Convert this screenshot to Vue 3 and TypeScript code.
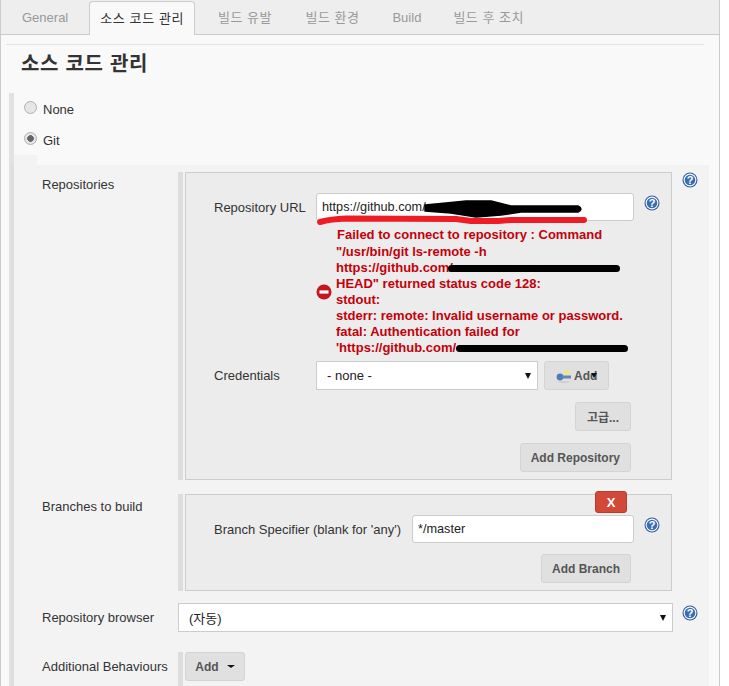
<template>
  <div class="page">
    <nav class="tabs">
      <span
        v-for="tab in tabs"
        :key="tab"
        class="tab"
        :class="{ active: tab === activeTab, ko: isKorean(tab) }"
      >{{ tab }}</span>
    </nav>

    <div class="body">
      <h1 class="title">소스 코드 관리</h1>

      <div class="scm">
        <label class="radio-row">
          <span class="radio"></span>
          <span>None</span>
        </label>
        <label class="radio-row git">
          <span class="radio checked"></span>
          <span>Git</span>
        </label>

        <div class="notch"></div>
        <div class="config">
          <!-- Repositories -->
          <div class="row repo-row">
            <div class="row-label">Repositories</div>
            <div class="nested">
              <div class="box repo-box">
                <div class="field">
                  <div class="field-label">Repository URL</div>
                  <div class="url-wrap">
                    <input class="text-input" value="https://github.com/" readonly />
                    <svg class="scribble" width="290" height="36" viewBox="0 0 290 36" aria-hidden="true">
                      <path class="ink" d="M109 12 L130 10 L150 8 L175 8 L195 13 L262 13 Q268 16 262 19 L205 19 L185 22 L160 24 L135 20 L109 18 Z" />
                      <path class="red-line" d="M4 29 Q15 26 30 25.5 L140 26 L155 28 L182 28 L195 27 L268 27" />
                    </svg>
                  </div>
                  <svg class="help" viewBox="0 0 16 16" aria-hidden="true">
                    <circle cx="8" cy="8" r="7.5" fill="#2f5c9f" />
                    <circle cx="8" cy="8" r="6.4" fill="#fff" />
                    <circle cx="8" cy="8" r="5.3" fill="#3a6db0" />
                    <text x="8" y="12" class="help-mark">?</text>
                  </svg>
                </div>

                <div class="error">
                  <svg class="error-icon" viewBox="0 0 16 16" aria-hidden="true">
                    <circle cx="8" cy="8" r="7.5" fill="#c4161c" />
                    <rect x="3.5" y="6.4" width="9" height="3.2" fill="#fff" />
                  </svg>
                  <div class="error-text">
                    <div class="first-line">Failed to connect to repository : Command</div>
                    <div>"/usr/bin/git ls-remote -h</div>
                    <div class="masked">https://github.com/<span class="blot blot-a"></span></div>
                    <div>HEAD" returned status code 128:</div>
                    <div>stdout:</div>
                    <div>stderr: remote: Invalid username or password.</div>
                    <div>fatal: Authentication failed for</div>
                    <div class="masked">'https://github.com/<span class="blot blot-b"></span></div>
                  </div>
                </div>

                <div class="field credentials">
                  <div class="field-label">Credentials</div>
                  <div class="select cred-select">
                    <span>- none -</span>
                    <i class="caret"></i>
                  </div>
                  <button class="btn key-btn" type="button">
                    <svg class="key" viewBox="0 0 16 16" aria-hidden="true">
                      <ellipse cx="8" cy="14" rx="6" ry="1" fill="#cfcfcf" />
                      <circle cx="4" cy="9" r="3.4" fill="#4f7db8" />
                      <rect x="6" y="7.5" width="9" height="3" fill="#5b88c0" />
                      <circle cx="11" cy="4.5" r="2.2" fill="#f4ea5a" />
                    </svg>
                    <span>Add</span>
                    <i class="caret mini"></i>
                  </button>
                </div>

                <div class="actions advanced">
                  <button class="btn ko-btn" type="button">고급...</button>
                </div>
                <div class="actions add-repo">
                  <button class="btn" type="button">Add Repository</button>
                </div>
              </div>
            </div>
            <svg class="help outer-help" viewBox="0 0 16 16" aria-hidden="true">
              <circle cx="8" cy="8" r="7.5" fill="#2f5c9f" />
              <circle cx="8" cy="8" r="6.4" fill="#fff" />
              <circle cx="8" cy="8" r="5.3" fill="#3a6db0" />
              <text x="8" y="12" class="help-mark">?</text>
            </svg>
          </div>

          <!-- Branches -->
          <div class="row branch-row">
            <div class="row-label">Branches to build</div>
            <div class="nested">
              <div class="box branch-box">
                <button class="delete" type="button">X</button>
                <div class="field">
                  <div class="field-label">Branch Specifier (blank for 'any')</div>
                  <input class="text-input branch-input" value="*/master" readonly />
                  <svg class="help" viewBox="0 0 16 16" aria-hidden="true">
                    <circle cx="8" cy="8" r="7.5" fill="#2f5c9f" />
                    <circle cx="8" cy="8" r="6.4" fill="#fff" />
                    <circle cx="8" cy="8" r="5.3" fill="#3a6db0" />
                    <text x="8" y="12" class="help-mark">?</text>
                  </svg>
                </div>
                <div class="actions add-branch">
                  <button class="btn" type="button">Add Branch</button>
                </div>
              </div>
            </div>
          </div>

          <!-- Browser -->
          <div class="row browser-row">
            <div class="row-label">Repository browser</div>
            <div class="select browser-select">
              <span>(자동)</span>
              <i class="caret"></i>
            </div>
            <svg class="help outer-help" viewBox="0 0 16 16" aria-hidden="true">
              <circle cx="8" cy="8" r="7.5" fill="#2f5c9f" />
              <circle cx="8" cy="8" r="6.4" fill="#fff" />
              <circle cx="8" cy="8" r="5.3" fill="#3a6db0" />
              <text x="8" y="12" class="help-mark">?</text>
            </svg>
          </div>

          <!-- Behaviours -->
          <div class="row behaviour-row">
            <div class="row-label">Additional Behaviours</div>
            <div class="nested">
              <button class="btn add-btn" type="button">
                Add
                <i class="caret small"></i>
              </button>
            </div>
          </div>
        </div>
      </div>
    </div>
  </div>
</template>

<script setup lang="ts">
const tabs: string[] = ['General', '소스 코드 관리', '빌드 유발', '빌드 환경', 'Build', '빌드 후 조치'];
const activeTab = '소스 코드 관리';

function isKorean(label: string): boolean {
  return /[가-힣]/.test(label);
}
</script>

<style>
html,
body {
  margin: 0;
  background: #fff;
  overflow: hidden;
}
</style>

<style scoped>
.page {
  box-sizing: border-box;
  width: 720px;
  height: 686px;
  overflow: hidden;
  border-left: 1px solid #ccc;
  border-right: 1px solid #ccc;
  background: #f9f9f9;
  color: #333;
  font-family: "Liberation Sans", "Noto Sans CJK KR", sans-serif;
  font-size: 13px;
}

.tabs {
  display: flex;
  align-items: flex-end;
  height: 34px;
  padding-left: 21px;
  border-bottom: 1px solid #ccc;
  background: #eee;
}

.tab {
  height: 33px;
  margin-right: 33px;
  color: #999;
  line-height: 33px;
  white-space: nowrap;
}

.tab.ko {
  letter-spacing: 0.5px;
}

.tab:first-child {
  margin-right: 21px;
}

.tab:nth-child(3) {
  margin-right: 33.5px;
}

.tab:nth-child(5) {
  margin-right: 32px;
}

.tab.active {
  box-sizing: content-box;
  height: 33px;
  margin-right: 23px;
  margin-bottom: -1px;
  padding: 0 10px;
  border: 1px solid #ccc;
  border-bottom: 0;
  border-radius: 4px 4px 0 0;
  background: #f9f9f9;
  color: #333;
  letter-spacing: 0.6px;
}

.body {
  padding: 9px 15px 0 5px;
}

.title {
  margin: 0;
  padding: 7px 0 0 15px;
  height: 42px;
  box-sizing: border-box;
  border-top: 1px solid #e4e4e4;
  color: #333;
  font-size: 20px;
  font-weight: 700;
  letter-spacing: 0.7px;
  line-height: 24px;
}

.scm {
  margin: 7px 0 0 3px;
  border-left: 5px solid #e2e2e2;
}

.radio-row {
  box-sizing: border-box;
  display: flex;
  align-items: center;
  gap: 6px;
  height: 31px;
  padding: 2px 0 0 10px;
  color: #333;
}

.radio {
  box-sizing: border-box;
  width: 13px;
  height: 13px;
  margin-top: -4px;
  border: 1px solid #b0b0b0;
  border-radius: 50%;
  background: #e6e6e6;
}

.radio.checked {
  background: radial-gradient(circle, #666 0 3px, #e6e6e6 3.6px);
}

.notch {
  width: 23px;
  height: 10px;
  background: #f3f3f3;
}

.config {
  margin: 0 -5px 0 -3px;
  border-left: 3px solid #ddd;
  background: #f3f3f3;
  padding: 7px 0 0 0;
}

.row {
  display: grid;
  grid-template-columns: 164px 495px 1fr;
  align-items: start;
}

.row-label {
  padding: 5px 0 0 28px;
  color: #333;
  line-height: 15px;
}

.nested {
  box-sizing: border-box;
  border-left: 5px solid #ddd;
  padding-left: 2px;
}

.box {
  position: relative;
  box-sizing: border-box;
  width: 487px;
  border: 1px solid #ccc;
  background: #ececec;
}

.repo-box {
  height: 308px;
  padding: 20px 0 0 28px;
}

.branch-box {
  height: 97px;
  padding: 20px 0 0 28px;
}

.field {
  display: flex;
  align-items: center;
}

.field-label {
  flex: none;
  width: 102px;
  color: #333;
  line-height: 15px;
  white-space: nowrap;
}

.url-wrap {
  position: relative;
  display: flex;
}

.text-input {
  box-sizing: border-box;
  width: 318px;
  height: 28px;
  padding: 0 5px;
  border: 1px solid #ccc;
  border-radius: 3px;
  outline: none;
  background: #fff;
  color: #222;
  font: 12.7px "Liberation Sans", sans-serif;
}

.branch-input {
  width: 222px;
  margin-left: 96px;
}

.help {
  flex: none;
  width: 16px;
  height: 16px;
  margin: 0 0 8px 10px;
}

.help-mark {
  fill: #fff;
  font: 700 11px "Liberation Sans", sans-serif;
  text-anchor: middle;
}

.outer-help {
  margin: 0 0 0 9px;
}

.browser-row .outer-help {
  margin-top: 2px;
}

.scribble {
  position: absolute;
  top: 0;
  left: 0;
  pointer-events: none;
}

.ink {
  fill: #000;
  stroke: #000;
  stroke-width: 1.5;
  stroke-linejoin: round;
}

.red-line {
  fill: none;
  stroke: #ee1c25;
  stroke-width: 6;
  stroke-linecap: round;
  stroke-linejoin: round;
}

.error {
  position: relative;
  display: flex;
  align-items: center;
  margin: 7px 0 0 102px;
  width: 340px;
}

.error-icon {
  flex: none;
  width: 16px;
  height: 16px;
  margin-right: 4px;
}

.error-text {
  color: #c4000a;
  font-size: 13px;
  font-weight: 700;
  line-height: 16px;
  white-space: nowrap;
}

.first-line {
  height: 16px;
  margin-left: 1px;
  line-height: 14px;
}

.masked {
  display: flex;
  align-items: center;
}

.blot {
  display: block;
  height: 7px;
  border-radius: 3.5px;
  background: #000;
}

.blot-a {
  width: 172px;
  margin-left: -5px;
}

.blot-b {
  width: 172px;
}

.credentials {
  margin-top: 5px;
}

.select {
  box-sizing: border-box;
  display: flex;
  align-items: center;
  justify-content: space-between;
  height: 29px;
  border: 1px solid #ccc;
  background: #fff;
  color: #222;
}

.cred-select {
  width: 222px;
  padding: 0 6px 0 10px;
}

.browser-select {
  width: 495px;
  padding: 0 6px 0 10px;
}

.caret {
  width: 0;
  height: 0;
  border-left: 3px solid transparent;
  border-right: 3px solid transparent;
  border-top: 6px solid #111;
}

.caret.small {
  border-top-width: 3px;
  border-left-width: 4px;
  border-right-width: 4px;
  margin-left: 8px;
}

.btn {
  display: inline-flex;
  align-items: center;
  justify-content: center;
  box-sizing: border-box;
  height: 29px;
  padding: 0 10px;
  border: 1px solid #d4d4d4;
  border-radius: 3px;
  background: #e0e0e0;
  color: #555;
  font: 700 12px "Liberation Sans", "Noto Sans CJK KR", sans-serif;
  white-space: nowrap;
}

.ko-btn {
  width: 56px;
  padding: 0;
}

.key-btn {
  position: relative;
  justify-content: flex-start;
  width: 65px;
  margin-left: 6px;
  padding: 0 0 0 11px;
}

.key {
  flex: none;
  width: 16px;
  height: 16px;
  margin-right: 2px;
}

.caret.mini {
  position: absolute;
  top: 11px;
  left: 46px;
  border-top-width: 5px;
}

.actions {
  display: flex;
  justify-content: flex-end;
  padding-right: 40px;
}

.advanced {
  margin-top: 12px;
}

.add-repo {
  margin-top: 12px;
}

.add-branch {
  margin-top: 11px;
}

.delete {
  position: absolute;
  top: -4px;
  right: 44px;
  width: 32px;
  height: 22px;
  padding: 0;
  border: 1px solid #b93c2c;
  border-radius: 3px;
  background: #d24939;
  color: #fff;
  font: 700 13px "Liberation Sans", sans-serif;
}

.branch-row {
  margin-top: 14px;
}

.browser-row {
  margin-top: 12px;
}

.browser-row .row-label {
  padding-top: 7px;
}

.behaviour-row {
  margin-top: 20px;
}

.behaviour-row .row-label {
  padding-top: 7px;
}

.behaviour-row .nested {
  height: 40px;
}

.add-btn {
  width: 60px;
  color: #555;
}
</style>
